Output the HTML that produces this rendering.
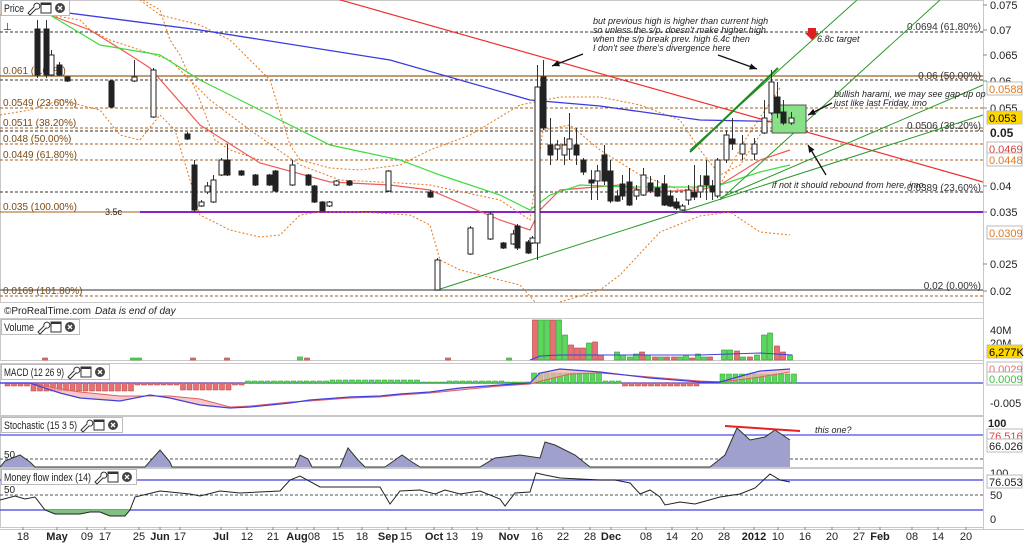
<!DOCTYPE html>
<html><head><meta charset="utf-8"><style>
html,body{margin:0;padding:0;background:#fff;width:1024px;height:545px;overflow:hidden}
svg{display:block;font-family:"Liberation Sans",sans-serif}
.ax{font-size:11px;fill:#222}
.fib{font-size:10px;fill:#7a4a14}
.note{font-size:9px;font-style:italic;fill:#222}
.dl{font-size:11px;fill:#222}
</style></head><body>
<svg id="s" width="1024" height="545" viewBox="0 0 1024 545" xmlns="http://www.w3.org/2000/svg">
<rect width="1024" height="545" fill="#fff"/>
<g id="g"></g>
</svg>
<script>
var g=document.getElementById('g'),h='';
function P(pts){return pts.map(function(p){return p[0]+','+p[1]}).join(' ')}
function pl(pts,c,w,extra){h+='<polyline points="'+P(pts)+'" fill="none" stroke="'+c+'" stroke-width="'+(w||1)+'" '+(extra||'')+'/>';}
function ln(x1,y1,x2,y2,c,w,extra){h+='<line x1="'+x1+'" y1="'+y1+'" x2="'+x2+'" y2="'+y2+'" stroke="'+c+'" stroke-width="'+(w||1)+'" '+(extra||'')+'/>';}
function tx(x,y,t,cls,extra){h+='<text x="'+x+'" y="'+y+'" class="'+cls+'" '+(extra||'')+'>'+t+'</text>';}
var R=983;
[[0,0,302],[0,318,42],[0,363,52],[0,416,51],[0,468,59]].forEach(function(p){h+='<rect x="0.5" y="'+(p[1]+0.5)+'" width="'+R+'" height="'+p[2]+'" fill="none" stroke="#c8c8c8"/>';});
ln(R+0.5,0,R+0.5,530,'#c8c8c8');
ln(0,529.5,1024,529.5,'#c8c8c8');
var D='stroke-dasharray="3,2"';
ln(0,32,R,32,'#333',1,D);
ln(0,76,R,76,'#a0601c',1.3);
ln(0,80,R,80,'#333',1,D);
ln(0,108,R,108,'#a0601c',1,D);
ln(0,128,R,128,'#a0601c',1,D);
ln(0,131,R,131,'#333',1,D);
ln(0,144,R,144,'#a0601c',1,D);
ln(0,160,R,160,'#a0601c',1,D);
ln(0,192,R,192,'#333',1,D);
ln(0,212,140,212,'#a0601c',1);
ln(140,212,R,212,'#8e1fc7',2);
ln(0,290,R,290,'#777',1.5);
ln(0,296,R,296,'#a0601c',1,D);
tx(3,74,'0.061 (0.00%)','fib');tx(3,106,'0.0549 (23.60%)','fib');tx(3,126,'0.0511 (38.20%)','fib');
tx(3,142,'0.048 (50.00%)','fib');tx(3,158,'0.0449 (61.80%)','fib');tx(3,210,'0.035 (100.00%)','fib');
tx(3,294,'0.0169 (101.80%)','fib');tx(105,215,'3.5c','fib','style="fill:#222;font-size:9px"');
tx(R-2,30,'0.0694 (61.80%)','fib','text-anchor="end" style="fill:#333"');
tx(R-2,79,'0.06 (50.00%)','fib','text-anchor="end" style="fill:#333"');
tx(R-2,129,'0.0506 (38.20%)','fib','text-anchor="end" style="fill:#333"');
tx(R-2,191,'0.0389 (23.60%)','fib','text-anchor="end" style="fill:#333"');
tx(R-2,289,'0.02 (0.00%)','fib','text-anchor="end" style="fill:#333"');
tx(3,30,'⊥','ax','style="font-size:10px"');
var OD='stroke-dasharray="2,2"';
pl([[140,0],[160,15],[200,25],[230,40],[270,80],[290,145],[300,160],[330,168],[360,170],[400,165],[430,150],[470,135],[520,105],[560,97],[600,97],[640,105],[680,120],[700,150],[720,175],[740,165],[770,120],[790,110]],'#e07a20',1,OD);
pl([[0,115],[30,110],[60,100],[80,105],[100,110],[120,135],[140,140],[160,115],[175,130],[190,180],[200,215],[230,230],[260,237],[280,235],[300,215],[320,212],[360,212],[410,215],[430,225],[440,260],[460,270],[520,285],[535,302]],'#e07a20',1,OD);
pl([[560,302],[600,290],[620,275],[660,232],[700,216],[730,212],[760,232],[790,235]],'#e07a20',1,OD);
pl([[0,15],[50,15],[80,20],[90,30],[110,40],[140,50],[170,60],[210,100],[250,130],[300,165],[340,180],[400,183],[430,185],[500,200],[530,220],[543,130],[570,125],[600,150],[640,175],[680,190],[720,185],[745,140],[780,88]],'#e07a20',1,OD);
pl([[143,0],[160,10],[170,40],[180,55],[200,100],[215,140],[230,150],[260,160]],'#e07a20',1,OD);
pl([[45,10],[200,30],[390,60],[530,100],[600,106],[700,120],[800,122]],'#3a3ae0',1.3);
pl([[50,15],[90,30],[130,55],[150,68],[200,125],[260,163],[330,182],[390,185],[430,190],[500,220],[530,230],[540,210],[560,190],[620,185],[650,192],[700,190],[720,185],[760,160],[790,150]],'#f05a5a',1.2);
pl([[50,15],[100,45],[160,55],[200,80],[260,110],[330,145],[400,160],[440,175],[500,195],[530,210],[550,195],[580,185],[630,187],[700,187],[720,185],[760,172],[790,165]],'#3ddc3d',1.2);
ln(330,-3,R,182,'#f03030',1.2);
ln(437,290,R,115,'#2a9a2a',1);
ln(690,150,857,0,'#2a9a2a',1);
ln(720,200,940,0,'#2a9a2a',1);
ln(720,198,R,85,'#2a9a2a',1);
ln(690,152,778,68,'#1f8a1f',2);
h+='<rect x="772" y="105" width="34" height="28" fill="#88e088" stroke="#555"/>';
var C=[[37,29,75,20,78,1],[46,29,75,20,78,1],[51,55,75,50,76,0],[59,65,75,62,76,1],[67,77,81,76,82,1],[111,81,107,80,108,1],[134,77,81,60,82,0],[153,70,117,68,118,0],[187,134,139,132,140,1],
[194,165,210,160,212,1],[201,202,206,200,207,0],[207,186,192,182,194,0],[213,180,202,175,203,0],[221,160,175,158,176,0],[227,160,175,144,176,1],[241,171,175,170,176,1],[255,175,185,174,186,1],[269,175,185,174,186,1],[275,171,191,170,192,1],[292,165,185,160,186,0],[308,175,185,174,186,1],[314,186,202,185,203,1],[322,202,211,201,212,1],[329,202,206,201,207,0],[336,181,185,180,186,0],[349,181,185,180,186,1],[388,171,191,170,192,0],[430,192,197,190,198,1],
[437,260,290,258,290,0],[470,228,254,226,255,0],[490,214,239,212,240,0],[503,243,248,242,249,1],[513,234,244,230,245,0],[517,226,248,224,250,1],[528,242,253,240,254,1],[532,238,243,236,244,0],[537,87,243,65,260,0],[543,77,128,60,130,1],[550,145,155,118,165,1],[557,145,149,140,160,0],[564,145,155,137,165,0],[569,139,149,113,160,0],[576,145,155,128,165,1],[583,160,172,158,175,1],[591,180,183,170,200,1],[597,171,181,165,200,0],[604,155,181,145,185,1],[610,171,201,160,203,1],[617,196,201,190,202,1],[622,184,196,175,200,1],[629,182,205,168,206,1],[636,190,196,185,200,0],[643,175,195,168,196,0],[650,183,191,176,193,1],[657,188,196,180,197,1],[664,184,205,175,206,1],[670,196,206,190,207,1],[676,202,208,198,210,1],[682,206,210,204,211,0],[688,190,200,185,205,0],[694,192,197,165,200,1],[700,186,192,175,198,0],[706,176,185,160,200,1],[712,186,192,180,200,1],[717,160,196,158,198,0],[726,135,160,130,163,0],[732,139,144,118,150,1],[742,144,154,135,160,0],[754,144,154,138,160,0],[764,118,133,100,134,0],[771,82,113,70,115,0],[777,97,113,82,118,1],[783,112,123,100,125,1],[791,118,123,112,125,0]];
C.forEach(function(c){ln(c[0]+0.5,c[3],c[0]+0.5,c[4],'#333');h+='<rect x="'+(c[0]-2)+'" y="'+c[1]+'" width="5" height="'+Math.max(2,c[2]-c[1])+'" fill="'+(c[5]?'#222':'#fff')+'" stroke="#222"/>';});
tx(593,24,'but previous high is higher than current high','note');
tx(593,33,'so unless the s/p. doesn\'t make higher high','note');
tx(593,42,'when the s/p break prev. high 6.4c then','note');
tx(593,51,'I don\'t see there\'s divergence here','note');
tx(817,42,'6.8c target','note');
tx(834,97,'bullish harami, we may see gap-up op','note');
tx(834,106,'just like last Friday, imo','note');
tx(772,188,'if not it should rebound from here, imo','note');
function arr(x1,y1,x2,y2){ln(x1,y1,x2,y2,'#111',1.3);var a=Math.atan2(y2-y1,x2-x1),L=8;h+='<polygon points="'+x2+','+y2+' '+(x2-L*Math.cos(a-0.4))+','+(y2-L*Math.sin(a-0.4))+' '+(x2-L*Math.cos(a+0.4))+','+(y2-L*Math.sin(a+0.4))+'" fill="#111"/>';}
arr(583,54,552,66);arr(718,55,757,69);arr(832,103,808,115);arr(826,175,808,145);
h+='<polygon points="808,28 816,28 816,33 819,33 812,40 805,33 808,33" fill="#e02020"/>';
tx(4,314,'©ProRealTime.com','dl','style="font-size:10px"');tx(95,314,'Data is end of day','dl','style="font-size:10px;font-style:italic"');
[[0.075,5],[0.07,30],[0.065,55],[0.06,81],[0.055,108],[0.04,186],[0.035,212],[0.025,264],[0.02,291]].forEach(function(a){tx(990,a[1]+4,a[0],'ax');ln(R,a[1],R+4,a[1],'#888');});
tx(990,137,'0.05','ax','style="font-weight:bold;font-size:12px"');
function box(y,t,col,bg){h+='<rect x="987" y="'+(y-7)+'" width="35" height="13" fill="'+(bg||'#fff')+'" stroke="#bbb"/>';tx(989,y+4,t,'ax','style="fill:'+col+'"');}
box(89,'0.0588','#e07a20');box(118,'0.053','#000','#ffd700');box(149,'0.0469','#e04040');box(160,'0.0448','#e07a20');box(233,'0.0309','#e07a20');
var V=[[535,320,'r'],[541,320,'g'],[547,320,'g'],[553,320,'r'],[559,320,'g'],[565,335,'g'],[571,345,'r'],[577,348,'r'],[583,348,'r'],[589,343,'g'],[595,342,'r'],[601,355,'r'],[617,352,'g'],[623,355,'g'],[630,357,'g'],[636,354,'g'],[642,352,'r'],[648,355,'g'],[655,357,'r'],[661,357,'g'],[667,357,'r'],[674,357,'r'],[680,357,'g'],[686,355,'g'],[692,358,'r'],[698,354,'g'],[704,357,'g'],[710,357,'r'],[724,350,'g'],[730,350,'g'],[737,351,'r'],[743,357,'g'],[750,357,'r'],[757,355,'g'],[764,335,'g'],[770,333,'g'],[777,346,'r'],[783,352,'r'],[790,355,'g'],[45,358,'r'],[133,358,'g'],[139,358,'g'],[193,358,'r'],[227,358,'r'],[300,357,'g'],[307,358,'r'],[448,358,'r'],[509,358,'g']];
V.forEach(function(v){h+='<rect x="'+(v[0]-2.5)+'" y="'+v[1]+'" width="5" height="'+(360-v[1])+'" fill="'+(v[2]=='g'?'#5ad85a':'#e87070')+'" stroke="'+(v[2]=='g'?'#2a9a2a':'#b04040')+'" stroke-width="0.6"/>';});
pl([[530,360],[540,356],[560,355],[700,355],[760,353],[792,355]],'#4040e0',1);
tx(990,334,'40M','ax');tx(990,347,'20M','ax');box(352,'6,277K','#000','#ffd700');
ln(0,383,R,383,'#4040e0',1.2);
for(var x=5;x<795;x+=6.5){var v=0;
 if(x<25)v=3;else if(x<135)v=8;else if(x<230&&x>175)v=7;else if(x<245)v=2;else if(x<330)v=-2;else if(x<420)v=-3;else if(x<445)v=-1;else if(x<500)v=-2;else if(x<530)v=-1;else if(x<600)v=-10;else if(x<620)v=-2;else if(x<700)v=3;else if(x<720)v=0;else v=-9;
 if(v!=0)h+='<rect x="'+x+'" y="'+(v>0?383:383+v)+'" width="5" height="'+Math.abs(v)+'" fill="'+(v>0?'#e87070':'#5ad85a')+'" stroke="'+(v>0?'#b04040':'#2a9a2a')+'" stroke-width="0.5"/>';}
var M=[[0,383],[30,383],[60,393],[80,398],[120,401],[150,395],[170,398],[200,405],[230,408],[250,407],[290,403],[310,400],[350,397],[380,396],[400,394],[430,392],[460,388],[500,385],[530,383],[540,373],[560,369],[600,372],[650,378],[700,382],[720,382],[745,375],[760,371],[790,369]];
var S=[[0,383],[30,383],[60,389],[80,392],[120,396],[150,396],[170,396],[200,399],[230,407],[250,406],[290,402],[310,401],[350,398],[380,397],[400,395],[430,393],[460,390],[500,386],[530,384],[545,380],[570,374],[600,373],[650,377],[700,381],[720,382],[745,379],[760,377],[790,372]];
h+='<polygon points="'+P(M.concat(S.slice().reverse()))+'" fill="#f4b0b0" opacity="0.7"/>';
pl(S,'#e06060',1);pl(M,'#4040e0',1.2);
box(369,'0.0029','#e07070');box(379,'0.0009','#40c040');tx(990,407,'-0.005','ax');
ln(0,435,R,435,'#6a6ae8',1.5);ln(0,459,R,459,'#555',1,D);
var ST=[[0,467],[5,461],[20,455],[30,462],[35,467],[145,467],[160,450],[170,462],[172,467],[295,467],[300,455],[308,459],[312,467],[340,467],[348,448],[358,460],[365,467],[385,467],[395,460],[402,455],[412,462],[420,467],[480,467],[495,458],[520,455],[540,458],[545,442],[555,445],[575,455],[590,467],[710,467],[725,455],[737,428],[750,440],[765,437],[775,430],[790,440]];
h+='<polygon points="'+P(ST.concat([[790,467]]))+'" fill="#a0a0cc"/>';
pl(ST,'#333',1);
ln(725,426,800,431,'#e82020',2);
tx(815,433,'this one?','note');
tx(988,427,'100','ax','style="font-weight:bold"');box(436,'76.516','#e04040');box(446,'66.026','#222');tx(4,458,'50','ax','style="font-size:10px"');
ln(0,480,R,480,'#4040e0',1.2);ln(0,495,R,495,'#555',1,D);ln(0,510,R,510,'#4040e0',1.2);
h+='<polygon points="45,510 55,514 80,514 90,512 100,512 110,516 125,516 130,510" fill="#80c080"/>';
pl([[0,500],[15,496],[25,499],[35,497],[45,510],[55,514],[80,514],[90,512],[100,512],[110,516],[125,516],[130,510],[135,497],[160,491],[190,494],[200,496],[220,491],[240,493],[280,491],[290,480],[300,476],[320,487],[380,487],[390,504],[400,491],[420,490],[435,494],[445,490],[460,494],[480,491],[500,499],[505,506],[515,493],[530,492],[536,473],[545,475],[560,478],[600,480],[615,480],[630,483],[640,494],[650,490],[660,497],[665,505],[680,502],[695,504],[720,497],[740,494],[755,488],[770,474],[780,480],[790,482]],'#222',1);
tx(990,477,'100','ax');box(482,'76.053','#222');tx(990,499,'50','ax');tx(990,523,'0','ax');tx(4,493,'50','ax','style="font-size:10px"');
[[23,'18'],[57,'May',1],[87,'09'],[105,'17'],[139,'25'],[160,'Jun',1],[180,'17'],[221,'Jul',1],[247,'12'],[273,'21'],[297,'Aug',1],[314,'08'],[338,'15'],[362,'18'],[388,'Sep',1],[406,'15'],[434,'Oct',1],[452,'13'],[477,'19'],[509,'Nov',1],[537,'16'],[563,'22'],[590,'28'],[611,'Dec',1],[646,'08'],[672,'14'],[697,'20'],[724,'28'],[754,'2012',1],[778,'10'],[805,'16'],[832,'20'],[859,'27'],[880,'Feb',1],[912,'08'],[938,'14'],[966,'20']].forEach(function(a){tx(a[0],540,a[1],'ax',(a[2]?'style="font-weight:bold"':'')+' text-anchor="middle"');ln(a[0],527,a[0],530,'#888');});
function title(y,t,tl){var w=tl+48;h+='<rect x="1.5" y="'+(y+0.5)+'" width="'+w+'" height="15" fill="#fff" stroke="#bbb"/>';tx(4,y+12,t,'dl','textLength="'+tl+'" lengthAdjust="spacingAndGlyphs"');var x=tl+7;
 h+='<path d="M'+(x+1)+' '+(y+13)+' l6 -6 a3 3 0 1 1 2 2 l-6 6 z" fill="none" stroke="#333" stroke-width="1"/>';
 h+='<rect x="'+(x+14)+'" y="'+(y+3)+'" width="10" height="10" fill="#fff" stroke="#333"/><rect x="'+(x+14)+'" y="'+(y+3)+'" width="10" height="2" fill="#333"/>';
 h+='<circle cx="'+(x+33)+'" cy="'+(y+8)+'" r="5" fill="#444"/><path d="M'+(x+31)+' '+(y+6)+' l4 4 M'+(x+35)+' '+(y+6)+' l-4 4" stroke="#fff" stroke-width="1.3"/>';}
title(0,'Price',20);title(319,'Volume',30);title(364,'MACD (12 26 9)',60);title(417,'Stochastic (15 3 5)',73);title(469,'Money flow index (14)',87);
g.innerHTML=h;
</script>
</body></html>
